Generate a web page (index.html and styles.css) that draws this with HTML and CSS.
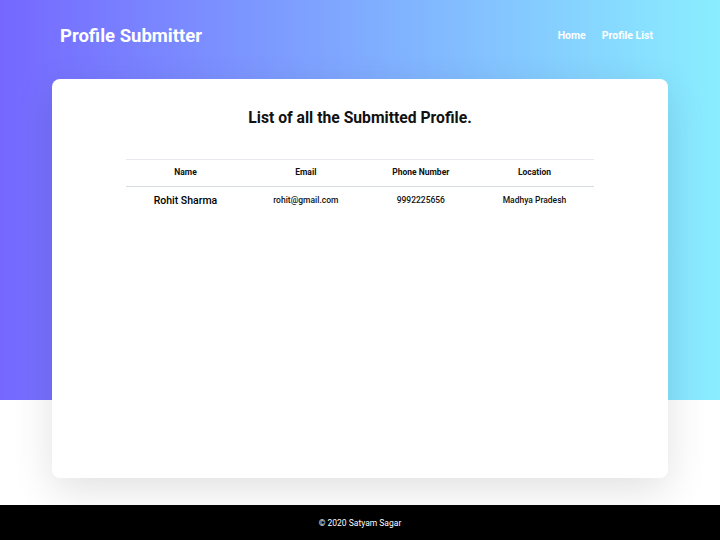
FILE: index.html
```html
<!DOCTYPE html>
<html>
<head>
<meta charset="utf-8">
<link rel="stylesheet" href="styles.css">
</head>
<body>
<div class="page">
  <header class="nav">
    <div class="brand">Profile Submitter</div>
    <nav class="links">
      <a href="#">Home</a>
      <a href="#">Profile List</a>
    </nav>
  </header>
  <main class="card">
    <h1 class="title">List of all the Submitted Profile.</h1>
    <table class="table">
      <thead>
        <tr><th>Name</th><th>Email</th><th>Phone Number</th><th>Location</th></tr>
      </thead>
      <tbody>
        <tr><td class="name">Rohit Sharma</td><td>rohit@gmail.com</td><td>9992225656</td><td>Madhya Pradesh</td></tr>
      </tbody>
    </table>
  </main>
  <footer class="footer">© 2020 Satyam Sagar</footer>
</div>
</body>
</html>
```
FILE: styles.css
```css
* { box-sizing: border-box; }
html, body { margin: 0; padding: 0; }
body {
  font-family: Roboto, "Liberation Sans", sans-serif;
  background: #fff;
  color: #111;
}
.page {
  min-height: 540px;
  display: flex;
  flex-direction: column;
  background: linear-gradient(to right, #7568ff, #8aeeff) top left / 100% 400px no-repeat, #fff;
}
.nav {
  display: flex;
  justify-content: space-between;
  align-items: center;
  height: 79px;
  padding: 0 67px 8px 60px;
}
.brand {
  color: #fff;
  font-weight: 700;
  font-size: 18.5px;
}
.links { display: flex; gap: 16px; }
.links a {
  color: #fff;
  text-decoration: none;
  font-weight: 700;
  font-size: 10.5px;
}
.card {
  margin: 0 52px;
  height: 399px;
  background: #fff;
  border-radius: 8px;
  box-shadow: 0 12px 40px rgba(0,0,0,0.12);
  padding-top: 29px;
}
.title {
  margin: 0;
  text-align: center;
  font-size: 15.7px;
  font-weight: 700;
  color: #111;
  line-height: 20px;
}
.table {
  width: 468px;
  margin: 31px auto 0;
  border-collapse: collapse;
}
.table th {
  font-size: 8.5px;
  font-weight: 700;
  color: #111;
  height: 27px;
  border-top: 1px solid #e6e9ee;
  border-bottom: 1px solid #d8dde3;
  padding: 0 4px 2px;
}
.table td {
  font-size: 8.5px;
  font-weight: 500;
  color: #111;
  text-align: center;
  height: 27px;
  padding: 0 4px;
}
.table td.name {
  font-size: 10.5px;
  font-weight: 500;
  color: #000;
}
.footer {
  margin-top: auto;
  height: 35px;
  background: #000;
  color: #fff;
  font-size: 8.5px;
  display: flex;
  align-items: center;
  justify-content: center;
}
```
